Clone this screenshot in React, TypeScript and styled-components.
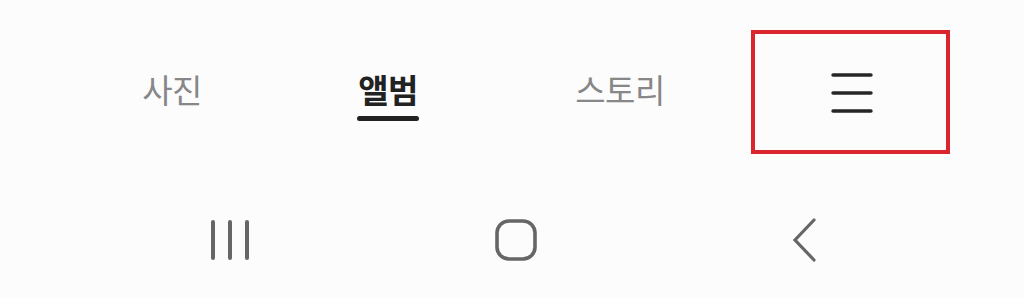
import React from 'react';
import styled, { createGlobalStyle } from 'styled-components';

// =============================================================================
// Styled Components
// =============================================================================

const GlobalStyle = createGlobalStyle`
  html, body {
    margin: 0;
    padding: 0;
    background: #fcfcfc;
  }
  body {
    font-family: "Noto Sans CJK KR", "Noto Sans", sans-serif;
  }
`;

const Screen = styled.div`
  width: 1024px;
  height: 298px;
  background: #fcfcfc;
  display: flex;
  flex-direction: column;
`;

const TabBar = styled.div`
  display: grid;
  grid-template-columns: 230px 202px 262px 199px;
  margin: 30px 0 0 57px;
  height: 124px;
`;

const Tab = styled.div<{ $active?: boolean }>`
  display: flex;
  flex-direction: column;
  align-items: center;
  justify-content: center;
  position: relative;
  font-size: 33px;
  line-height: 1;
  letter-spacing: -0.5px;
  font-weight: ${(p) => (p.$active ? 700 : 400)};
  color: ${(p) => (p.$active ? '#222222' : '#878787')};
`;

const Label = styled.span`
  position: relative;
  top: -3px;
`;

const Underline = styled.span`
  position: absolute;
  left: 50%;
  top: 86px;
  width: 62px;
  height: 5px;
  margin-left: -31px;
  border-radius: 3px;
  background: #222222;
`;

const MenuTab = styled.div`
  box-sizing: border-box;
  border: 4px solid #d9262e;
  display: flex;
  align-items: center;
  justify-content: center;
`;

const NavBar = styled.div`
  display: grid;
  grid-template-columns: 229px 344px 231px;
  margin: 63px 0 0 115px;
  height: 44px;
  align-items: center;
  justify-items: center;
`;

// =============================================================================
// Icons
// =============================================================================

const MenuIcon = () => (
  <svg width="44" height="42" viewBox="0 0 44 42" style={{ marginTop: 1, marginLeft: 2 }}>
    <g stroke="#262626" strokeWidth="3.4" strokeLinecap="round">
      <line x1="3" y1="3" x2="41" y2="3" />
      <line x1="3" y1="21" x2="41" y2="21" />
      <line x1="3" y1="39" x2="41" y2="39" />
    </g>
  </svg>
);

const RecentsIcon = () => (
  <svg width="40" height="42" viewBox="0 0 40 42">
    <g stroke="#666666" strokeWidth="4" strokeLinecap="round">
      <line x1="3" y1="3" x2="3" y2="39" />
      <line x1="20" y1="3" x2="20" y2="39" />
      <line x1="37" y1="3" x2="37" y2="39" />
    </g>
  </svg>
);

const HomeIcon = () => (
  <svg width="44" height="44" viewBox="0 0 44 44">
    <rect x="3" y="3" width="38" height="38" rx="12" fill="none" stroke="#666666" strokeWidth="3.6" />
  </svg>
);

const BackIcon = () => (
  <svg width="28" height="46" viewBox="0 0 28 46">
    <polyline points="24,3 5,23 24,43" fill="none" stroke="#666666" strokeWidth="3.2" strokeLinecap="round" strokeLinejoin="miter" />
  </svg>
);

// =============================================================================
// Main Component
// =============================================================================

const App = () => {
  return (
    <>
      <GlobalStyle />
      <Screen>
        <TabBar>
          <Tab>
            <Label>사진</Label>
          </Tab>
          <Tab $active>
            <Label>앨범</Label>
            <Underline />
          </Tab>
          <Tab>
            <Label>스토리</Label>
          </Tab>
          <MenuTab>
            <MenuIcon />
          </MenuTab>
        </TabBar>
        <NavBar>
          <RecentsIcon />
          <HomeIcon />
          <BackIcon />
        </NavBar>
      </Screen>
    </>
  );
};

export default App;
